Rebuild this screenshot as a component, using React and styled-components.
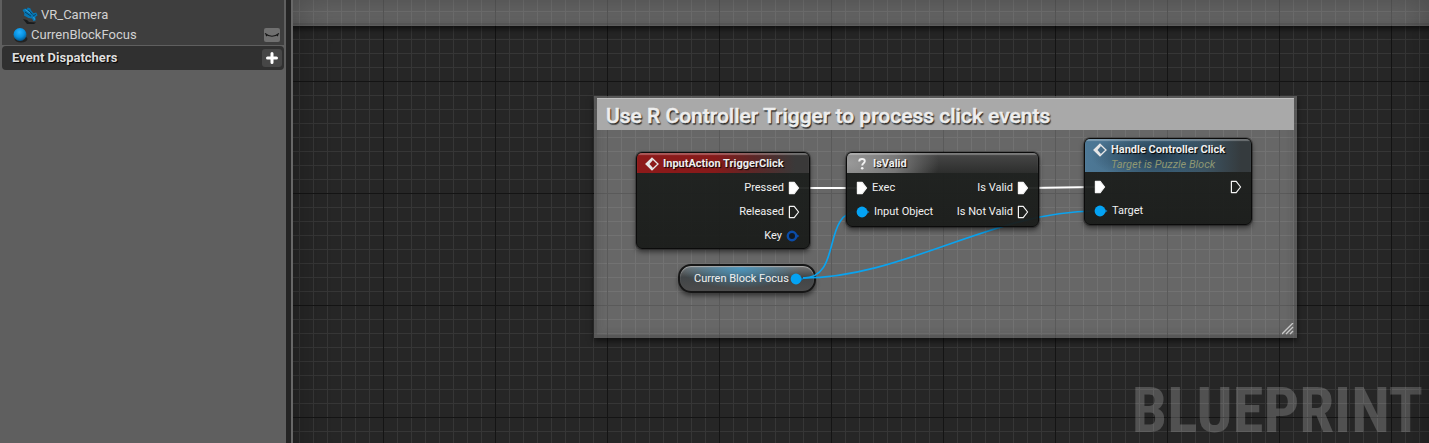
import React from "react";
import styled, { createGlobalStyle, css } from "styled-components";

const GlobalStyle = createGlobalStyle`
  * { box-sizing: border-box; }
  body { margin: 0; background: #262626; font-family: Roboto, "Liberation Sans", sans-serif; }
  button { font: inherit; }
`;

const Editor = styled.div`
  display: flex;
  min-height: 100vh;
  overflow: hidden;
`;

const Sidebar = styled.aside`
  flex: 0 0 293px;
  padding: 0 1px 0 2px;
  background: #5f5f5f;
  border-right: 2px solid #686868;
  box-shadow: inset -5px 0 0 #242424;
`;

const VariableList = styled.ul`
  list-style: none;
  margin: 0;
  padding: 5px 0 0;
  width: 282px;
  background: #3e3e3e;
`;

const VariableRow = styled.li`
  display: flex;
  align-items: center;
  gap: 3px;
  height: 20px;
  padding: 0 4px 0 ${(p) => (p.$nested ? 20 : 10)}px;
  color: #d2d2d2;
  font-size: 13px;
  line-height: 20px;
`;

const VariableName = styled.span`
  flex: 1;
`;

const EyeButton = styled.button`
  width: 16px;
  height: 14px;
  padding: 0;
  border: 0;
  border-radius: 2px;
  background: #707070;
  display: flex;
`;

const SectionHeader = styled.header`
  display: flex;
  align-items: center;
  justify-content: space-between;
  width: 282px;
  height: 24px;
  margin-top: 1px;
  padding: 0 2px 0 10px;
  border-radius: 4px;
  background: #303030;
`;

const SectionTitle = styled.h2`
  margin: 0;
  color: #dedede;
  font-size: 13px;
  line-height: 20px;
  font-weight: 700;
  text-shadow: 1px 1px 1px #000;
`;

const AddButton = styled.button`
  width: 20px;
  height: 18px;
  padding: 0;
  border: 0;
  border-radius: 3px;
  background: #464646;
  display: grid;
  place-items: center;
`;

const Graph = styled.main`
  position: relative;
  flex: 1;
  min-width: 0;
  overflow: hidden;
  background-color: #262626;
  background-image:
    linear-gradient(90deg, #141414 1px, transparent 1px),
    linear-gradient(#141414 1px, transparent 1px),
    linear-gradient(90deg, #363636 1px, transparent 1px),
    linear-gradient(#363636 1px, transparent 1px);
  background-size: 112px 112px, 112px 112px, 14px 14px, 14px 14px;
  background-position: 90px 0, 0 81px, 90px 0, 0 81px;

  &::after {
    content: "";
    position: absolute;
    inset: 0 0 -40px;
    pointer-events: none;
    box-shadow: inset 0 0 36px rgba(0, 0, 0, 0.3);
  }
`;

const commentSurface = css`
  background: rgba(255, 255, 255, 0.3);
  border: 3px solid rgba(60, 60, 60, 0.35);
  box-shadow: 0 3px 6px rgba(0, 0, 0, 0.6), inset 0 0 8px rgba(40, 40, 40, 0.2);
`;

const UpperComment = styled.section`
  ${commentSurface}
  position: absolute;
  inset: -40px -20px auto -20px;
  height: 66px;
`;

const CommentBox = styled.section`
  ${commentSurface}
  position: absolute;
  left: 301px;
  top: 96px;
  width: 703px;
  height: 242px;
  border-top-width: 2px;
`;

const CommentTitle = styled.h1`
  margin: 0;
  padding: 0 9px;
  height: 32px;
  background: #a9a9a9;
  border-top: 1px solid #c0c0c0;
  color: #eeeeee;
  font-size: 21px;
  line-height: 34px;
  font-weight: 500;
  white-space: nowrap;
  -webkit-text-stroke: 0.5px #eeeeee;
  text-shadow: 1px 1px 1px #222, 1px 2px 1px #555;
`;

const ResizeGrip = styled.svg`
  position: absolute;
  right: 0;
  bottom: 0;
`;

const Wires = styled.svg`
  position: absolute;
  left: 0;
  top: 0;
  fill: none;
`;

const Node = styled.article`
  position: absolute;
  left: ${(p) => p.$x}px;
  top: ${(p) => p.$y}px;
  width: ${(p) => p.$w}px;
  padding-bottom: ${(p) => p.$foot}px;
  overflow: hidden;
  border: 1px solid #0b0b0b;
  border-radius: 6px;
  background: linear-gradient(rgba(29, 32, 30, 0.94), rgba(25, 27, 25, 0.94));
  box-shadow: 0 0 0 1px rgba(10, 10, 10, 0.3), 0 3px 5px rgba(0, 0, 0, 0.5);
  color: #f0f0f0;
  font-size: 11px;
`;

const headerTones = {
  event: "linear-gradient(90deg, #8e1a1a, #861a1a 45%, #5c2727 68%, #3a3939 92%)",
  macro: "radial-gradient(ellipse 92px 46px at 0 10px, #9a9a9a, #777777 55%, transparent), linear-gradient(#484848, #2d2e2d)",
  call: "radial-gradient(ellipse 64px 24px at 42% 50%, rgba(22, 42, 58, 0.75), transparent), linear-gradient(90deg, #4d7896, #42677f 55%, #353b3e 94%)",
};

const NodeHeader = styled.header`
  display: flex;
  align-items: flex-start;
  gap: 4px;
  height: ${(p) => (p.$tone === "call" ? 33 : 20)}px;
  padding: 3px 8px 0;
  background: ${(p) => headerTones[p.$tone]};
  box-shadow: inset 0 2px 1px rgba(255, 255, 255, 0.28);
`;

const NodeTitle = styled.h2`
  margin: 0;
  color: #eeeeee;
  font-size: 11px;
  line-height: 16px;
  font-weight: 700;
  white-space: nowrap;
  text-shadow: 1px 1px 1px #000;
`;

const NodeSubtitle = styled.p`
  margin: 0;
  color: #8f9873;
  font-size: 11px;
  line-height: 13px;
  font-style: italic;
  white-space: nowrap;
`;

const PinRow = styled.div`
  display: flex;
  align-items: center;
  justify-content: space-between;
  height: 24px;
  padding: 0 9px;
`;

const PinRows = styled.div`
  padding-top: 3px;
`;

const Pin = styled.span`
  display: flex;
  align-items: center;
  gap: 4px;
  line-height: 16px;
  white-space: nowrap;
`;

const VariableNode = styled.article`
  position: absolute;
  left: 385px;
  top: 264px;
  width: 138px;
  height: 29px;
  padding: 0 10px 0 14px;
  display: flex;
  align-items: center;
  justify-content: space-between;
  border: 2px solid #161616;
  border-radius: 13px;
  background:
    radial-gradient(ellipse 60px 20px at 45% 10%, rgba(70, 155, 200, 0.85), transparent),
    linear-gradient(#777777, #414547 45%, #4c4c4c);
  box-shadow: inset 0 1px 1px #aaaaaa, 0 3px 4px rgba(0, 0, 0, 0.45);
  color: #f0f0f0;
  font-size: 11px;
  white-space: nowrap;
`;

const Watermark = styled.div`
  position: absolute;
  right: 6px;
  bottom: 0;
  color: rgba(255, 255, 255, 0.2);
  font-family: "Roboto Condensed", "Liberation Sans Narrow", Roboto, sans-serif;
  font-size: 63px;
  line-height: 64px;
  font-weight: 700;
`;

function ExecPin({ connected }) {
  return (
    <svg width="12" height="14" viewBox="0 0 12 14">
      <path d="M1.4 1.4H6.2L10.6 7L6.2 12.6H1.4Z" fill={connected ? "#fff" : "none"} stroke="#f4f4f4" strokeWidth="1.2" strokeLinejoin="round" />
    </svg>
  );
}

function ObjectPin() {
  return (
    <svg width="14" height="12" viewBox="0 0 14 12">
      <path d="M9 2.8L13.5 6L9 9.2Z" fill="#0879b9" />
      <circle cx="6" cy="6" r="5.4" fill="#04a3f4" />
    </svg>
  );
}

function KeyPin() {
  return (
    <svg width="14" height="12" viewBox="0 0 14 12">
      <path d="M9 3L13.4 6L9 9Z" fill="#0b4ca8" />
      <circle cx="6" cy="6" r="4.2" fill="#101923" stroke="#0b4ca8" strokeWidth="2.4" />
    </svg>
  );
}

function EventIcon() {
  return (
    <svg width="14" height="16" viewBox="0 0 14 16">
      <path d="M7 2.2L13 8L7 13.8L1 8Z" fill="none" stroke="#e6e6e6" strokeWidth="1.3" />
      <path d="M7 2.2L1 8L7 13.8L8 12L4.5 8L8 4Z" fill="#e6e6e6" />
    </svg>
  );
}

function QuestionIcon() {
  return (
    <svg width="14" height="16" viewBox="0 0 14 16">
      <path d="M4.2 5.5C4.2 3.6 5.4 3 7 3C8.7 3 9.8 3.8 9.8 5.3C9.8 7.1 7.2 7.3 7.2 9.4" fill="none" stroke="#f2f2f2" strokeWidth="1.9" />
      <circle cx="7.2" cy="12.2" r="1.3" fill="#f2f2f2" />
    </svg>
  );
}

function CameraIcon() {
  return (
    <svg width="16" height="17" viewBox="0 0 16 17">
      <path d="M1 12L5 13L7 15L14 15.5L12 17H5Z" fill="#191b1d" />
      <path d="M0.5 3L3 1.4L4.5 2.2L5.8 0.4L8.3 1.2L9.2 3.4L11.4 6.3L14.2 5.6L15.6 8.2L13.3 10L13.8 13.3L11.5 14.2L10 11.5L6.5 11L2 8.4L2.4 6.2Z" fill="#0877b4" />
      <path d="M3 5L9 9.2M6 2.8L10.6 7.5M11 9L13.8 7.4" stroke="#064063" fill="none" />
      <path d="M3.3 2.6L8 6M11.6 10L12.6 12.6" stroke="#29a4e2" fill="none" />
    </svg>
  );
}

function SphereIcon() {
  return (
    <svg width="16" height="16" viewBox="0 0 16 16">
      <defs>
        <radialGradient id="sphere" cx="45%" cy="32%" r="65%">
          <stop offset="0" stopColor="#27b2ff" />
          <stop offset="0.6" stopColor="#0792e2" />
          <stop offset="1" stopColor="#075b91" />
        </radialGradient>
      </defs>
      <ellipse cx="9" cy="12" rx="6.5" ry="3.5" fill="#222" />
      <circle cx="8" cy="7.5" r="6.5" fill="url(#sphere)" />
    </svg>
  );
}

export default function App() {
  return (
    <>
      <GlobalStyle />
      <Editor>
        <Sidebar>
          <VariableList>
            <VariableRow $nested>
              <CameraIcon />
              <VariableName>VR_Camera</VariableName>
            </VariableRow>
            <VariableRow>
              <SphereIcon />
              <VariableName>CurrenBlockFocus</VariableName>
              <EyeButton aria-label="Toggle visibility">
                <svg width="16" height="14" viewBox="0 0 16 14">
                  <path d="M1 5.5Q8 11 15 5.5M3 7L2 8M13 7L14 8" fill="none" stroke="#171717" strokeWidth="1.1" />
                </svg>
              </EyeButton>
            </VariableRow>
          </VariableList>
          <SectionHeader>
            <SectionTitle>Event Dispatchers</SectionTitle>
            <AddButton aria-label="Add event dispatcher">
              <svg width="12" height="12" viewBox="0 0 12 12">
                <path d="M6 1.5V10.5M1.5 6H10.5" stroke="#fff" strokeWidth="3" strokeLinecap="round" />
              </svg>
            </AddButton>
          </SectionHeader>
        </Sidebar>

        <Graph>
          <UpperComment />
          <CommentBox>
            <CommentTitle>Use R Controller Trigger to process click events</CommentTitle>
            <ResizeGrip width="12" height="12" viewBox="0 0 12 12">
              <path d="M0 11L11 0M4 11L11 4M8 11L11 8" stroke="#c8c8c8" strokeWidth="1.4" />
            </ResizeGrip>
          </CommentBox>

          <VariableNode>
            <span>Curren Block Focus</span>
            <ObjectPin />
          </VariableNode>

          <Wires width="1136" height="443">
            <path d="M506 188H564M736 188L802 187" stroke="#fff" strokeWidth="2" />
            <path d="M510 278C550 278 528 212 566 211" stroke="#0aa3ef" strokeWidth="1.7" />
            <path d="M510 278C610 278 700 211 802 211" stroke="#0aa3ef" strokeWidth="1.7" />
          </Wires>

          <Node $x={343} $y={152} $w={174} $foot={0}>
            <NodeHeader $tone="event">
              <EventIcon />
              <NodeTitle>InputAction TriggerClick</NodeTitle>
            </NodeHeader>
            <PinRows>
              <PinRow><span /><Pin>Pressed<ExecPin connected /></Pin></PinRow>
              <PinRow><span /><Pin>Released<ExecPin /></Pin></PinRow>
              <PinRow><span /><Pin>Key<KeyPin /></Pin></PinRow>
            </PinRows>
          </Node>

          <Node $x={553} $y={152} $w={193} $foot={2}>
            <NodeHeader $tone="macro">
              <QuestionIcon />
              <NodeTitle>IsValid</NodeTitle>
            </NodeHeader>
            <PinRows>
              <PinRow><Pin><ExecPin connected />Exec</Pin><Pin>Is Valid<ExecPin connected /></Pin></PinRow>
              <PinRow><Pin><ObjectPin />Input Object</Pin><Pin>Is Not Valid<ExecPin /></Pin></PinRow>
            </PinRows>
          </Node>

          <Node $x={791} $y={138} $w={168} $foot={1}>
            <NodeHeader $tone="call">
              <EventIcon />
              <div>
                <NodeTitle>Handle Controller Click</NodeTitle>
                <NodeSubtitle>Target is Puzzle Block</NodeSubtitle>
              </div>
            </NodeHeader>
            <PinRows>
              <PinRow><Pin><ExecPin connected /></Pin><Pin><ExecPin /></Pin></PinRow>
              <PinRow><Pin><ObjectPin />Target</Pin></PinRow>
            </PinRows>
          </Node>

          <Watermark>BLUEPRINT</Watermark>
        </Graph>
      </Editor>
    </>
  );
}
